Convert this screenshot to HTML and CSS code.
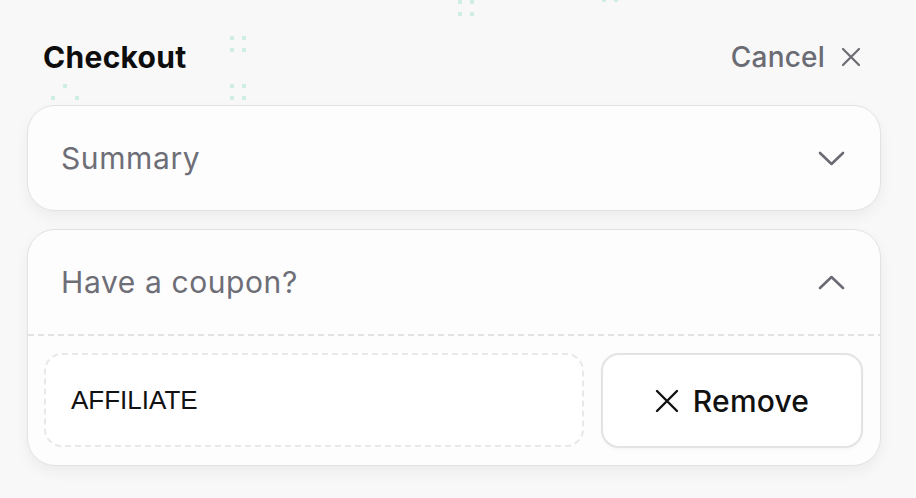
FILE: index.html
```html
<!DOCTYPE html>
<html lang="en">
<head>
<meta charset="utf-8">
<title>Checkout</title>
<link rel="stylesheet" href="styles.css">
</head>
<body>
<div class="page">
  <div class="dots" aria-hidden="true">
    <span class="dot d1"></span><span class="dot d2"></span><span class="dot d3"></span><span class="dot d4"></span>
    <span class="dot d5"></span><span class="dot d6"></span><span class="dot d7"></span><span class="dot d8"></span>
    <span class="dot d9"></span><span class="dot d10"></span><span class="dot d11"></span>
    <span class="dot d12"></span><span class="dot d13"></span><span class="dot d14"></span><span class="dot d15"></span>
    <span class="dot d16"></span><span class="dot d17"></span>
  </div>
  <header class="top">
    <h1 class="title">Checkout</h1>
    <button class="cancel" type="button">
      <span>Cancel</span>
      <svg class="x-icon" width="20" height="20" viewBox="0 0 20 20"><path d="M2 2 L18 18 M18 2 L2 18" /></svg>
    </button>
  </header>

  <section class="card">
    <div class="card-head">
      <span class="card-title">Summary</span>
      <svg class="chev" width="27" height="15" viewBox="0 0 27 15"><polyline points="2,2 13.5,13 25,2" /></svg>
    </div>
  </section>

  <section class="card">
    <div class="card-head">
      <span class="card-title">Have a coupon?</span>
      <svg class="chev" width="27" height="15" viewBox="0 0 27 15"><polyline points="2,13 13.5,2 25,13" /></svg>
    </div>
    <div class="divider"></div>
    <div class="coupon-body">
      <div class="coupon-input">AFFILIATE</div>
      <button class="remove" type="button">
        <svg class="x-icon dark" width="24" height="24" viewBox="0 0 24 24"><path d="M2 2 L22 22 M22 2 L2 22" /></svg>
        <span>Remove</span>
      </button>
    </div>
  </section>
</div>
</body>
</html>
```

FILE: styles.css
```css
* { box-sizing: border-box; }

html, body {
  margin: 0;
  padding: 0;
  background: #f8f8f8;
  font-family: Inter, "Noto Sans", "Liberation Sans", sans-serif;
  color: #111;
}

.page {
  position: relative;
  width: 916px;
  height: 498px;
  overflow: hidden;
  padding: 0 35px 0 27px;
}

.dots { position: absolute; inset: 0; pointer-events: none; }
.dot {
  position: absolute;
  width: 4px;
  height: 4px;
  border-radius: 1px;
  background: #cdeee2;
}
.d1 { left: 230px; top: 36px; }
.d2 { left: 242px; top: 36px; }
.d3 { left: 230px; top: 48px; }
.d4 { left: 242px; top: 48px; }
.d5 { left: 230px; top: 84px; }
.d6 { left: 242px; top: 84px; }
.d7 { left: 230px; top: 96px; }
.d8 { left: 242px; top: 96px; }
.d9 { left: 63px; top: 84px; }
.d10 { left: 51px; top: 96px; }
.d11 { left: 75px; top: 96px; }
.d12 { left: 458px; top: 0px; }
.d13 { left: 470px; top: 0px; }
.d14 { left: 458px; top: 12px; }
.d15 { left: 470px; top: 12px; }
.d16 { left: 602px; top: -2px; }
.d17 { left: 614px; top: -2px; }

.top {
  position: relative;
  display: flex;
  align-items: flex-start;
  justify-content: space-between;
  padding: 39px 20px 0 16px;
  height: 105px;
}

.title {
  margin: 0;
  font-size: 30px;
  line-height: 36px;
  font-weight: 700;
  color: #0d0d0d;
  letter-spacing: 0.3px;
}

.cancel {
  display: flex;
  align-items: center;
  gap: 16px;
  border: 0;
  background: none;
  padding: 0;
  font: inherit;
  font-size: 28px;
  line-height: 36px;
  font-weight: 500;
  color: #6b6b73;
  letter-spacing: 0.2px;
}

.x-icon path {
  stroke: #6b6b73;
  stroke-width: 2.2;
  stroke-linecap: round;
  fill: none;
}
.x-icon.dark path { stroke: #111; stroke-width: 2.4; }

.card {
  position: relative;
  background: #fdfdfd;
  border: 1px solid #e2e2e2;
  border-radius: 28px;
  box-shadow: 0 6px 14px rgba(0, 0, 0, 0.05);
  margin-bottom: 18px;
}

.card-head {
  display: flex;
  align-items: center;
  justify-content: space-between;
  padding: 34px 35px 34px 33px;
}

.card-title {
  font-size: 30px;
  line-height: 36px;
  font-weight: 400;
  color: #6e6e77;
  letter-spacing: 0.6px;
}

.chev polyline {
  fill: none;
  stroke: #6b6b73;
  stroke-width: 2.6;
  stroke-linecap: round;
  stroke-linejoin: round;
}

.divider {
  height: 2px;
  background: repeating-linear-gradient(90deg, #e2e2e2 0 6px, transparent 6px 10px);
}

.coupon-body {
  display: flex;
  gap: 17px;
  padding: 17px 17px 17px 16px;
}

.coupon-input {
  flex: 1;
  height: 94px;
  display: flex;
  align-items: center;
  padding: 0 25px;
  border: 2px dashed #e8e8e8;
  border-radius: 18px;
  background: #fff;
  font-family: "Liberation Sans", Arial, sans-serif;
  font-size: 26px;
  color: #111;
}

.remove {
  width: 262px;
  height: 95px;
  display: flex;
  align-items: center;
  justify-content: center;
  gap: 14px;
  background: #fff;
  border: 2px solid #e3e3e3;
  border-radius: 18px;
  box-shadow: 0 1px 3px rgba(0, 0, 0, 0.04);
  font: inherit;
  font-size: 30px;
  font-weight: 500;
  color: #111;
  letter-spacing: 0.2px;
  padding: 0;
}
```
